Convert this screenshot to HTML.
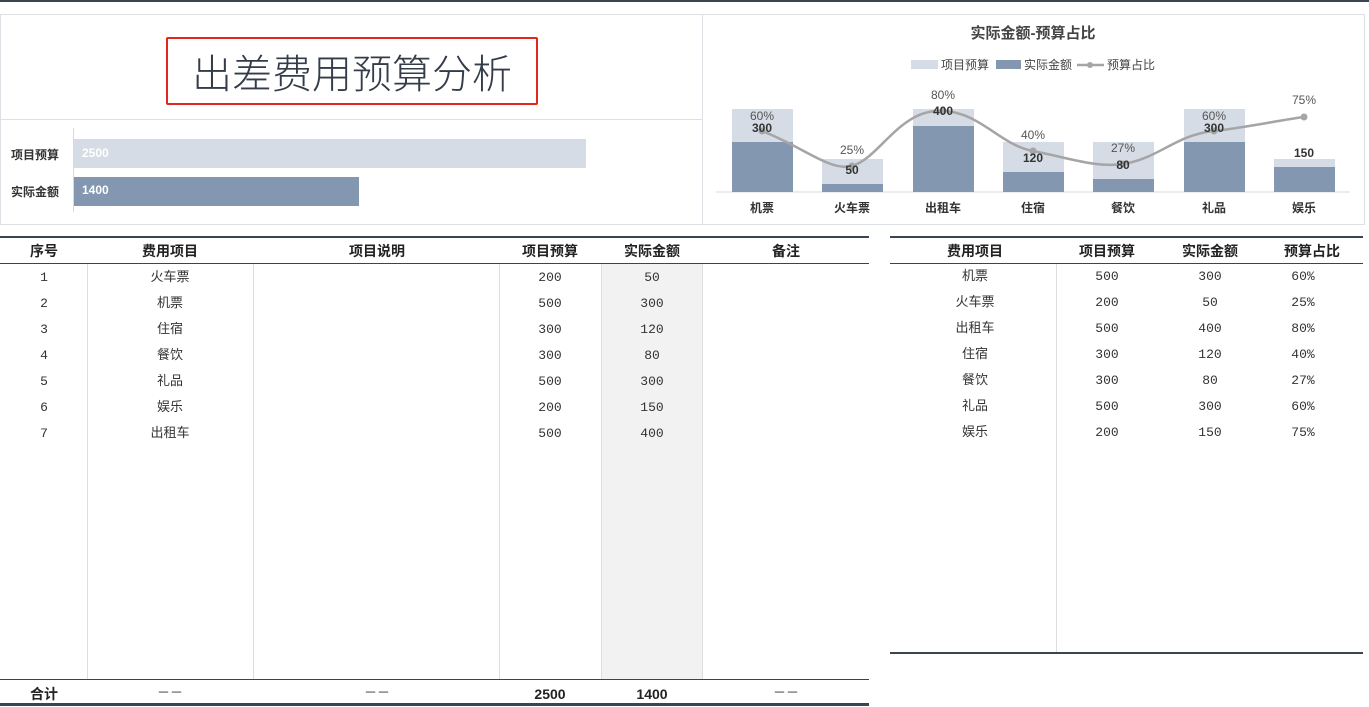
<!DOCTYPE html>
<html><head><meta charset="utf-8"><style>
*{margin:0;padding:0;box-sizing:border-box}
body{width:1369px;height:707px;background:#fff;position:relative;overflow:hidden;font-family:"Liberation Sans","Noto Sans CJK SC",sans-serif;color:#222}
.a{position:absolute}
.c{position:absolute;text-align:center;font-size:14px;line-height:16px;transform:translateX(-50%);white-space:nowrap;font-family:"Liberation Mono","Noto Sans CJK SC",monospace;font-size:13px;color:#333}
.b{font-weight:bold;font-family:"Liberation Sans","Noto Sans CJK SC",sans-serif;font-size:14px;color:#222}
</style></head><body>
<div class="a" style="left:0;top:0;width:1369px;height:2px;background:#3a4550"></div>
<div class="a" style="left:0;top:14px;width:1365px;height:211px;border:1px solid #dde1e5"></div>
<div class="a" style="left:702px;top:14px;width:1px;height:211px;background:#dde1e5"></div>
<div class="a" style="left:0;top:119px;width:702px;height:1px;background:#dde1e5"></div>
<div class="a" style="left:166px;top:37px;width:372px;height:68px;border:2px solid #e3261f;border-radius:2px"></div>
<div class="c" style="left:352px;top:45px;font-size:40px;line-height:52px;color:#333c48;font-family:'Noto Sans CJK SC',sans-serif;font-weight:300">出差费用预算分析</div>
<div class="a" style="left:73px;top:128px;width:1px;height:84px;background:#d9d9d9"></div>
<div class="a" style="left:74px;top:139px;width:512px;height:29px;background:#d5dce5"></div>
<div class="a" style="left:74px;top:177px;width:285px;height:29px;background:#8497b0"></div>
<div class="a" style="left:11px;top:146px;font-size:12px;color:#333;font-weight:bold">项目预算</div>
<div class="a" style="left:11px;top:183px;font-size:12px;color:#333;font-weight:bold">实际金额</div>
<div class="a" style="left:82px;top:146px;font-size:12px;color:#fff;font-weight:bold">2500</div>
<div class="a" style="left:82px;top:183px;font-size:12px;color:#fff;font-weight:bold">1400</div>

<svg class="a" style="left:703px;top:15px" width="662" height="209" viewBox="703 15 662 209">
<text x="1033" y="38" font-size="15" font-weight="bold" fill="#444" text-anchor="middle" font-family="Liberation Sans,Noto Sans CJK SC,sans-serif">实际金额-预算占比</text>
<rect x="911" y="60" width="27" height="9" fill="#d5dce5"/><text x="941" y="69" font-size="12" fill="#444" font-family="Noto Sans CJK SC,sans-serif">项目预算</text>
<rect x="996" y="60" width="25" height="9" fill="#8497b0"/><text x="1024" y="69" font-size="12" fill="#444" font-family="Noto Sans CJK SC,sans-serif">实际金额</text>
<line x1="1077" y1="65" x2="1104" y2="65" stroke="#a5a5a5" stroke-width="2.5"/><circle cx="1090" cy="65" r="3" fill="#a5a5a5"/><text x="1107" y="69" font-size="12" fill="#444" font-family="Noto Sans CJK SC,sans-serif">预算占比</text>
<line x1="716" y1="192" x2="1350" y2="192" stroke="#d9d9d9"/>
<g fill="#d5dce5">
<rect x="732" y="109" width="61" height="83"/><rect x="822" y="159" width="61" height="33"/><rect x="913" y="109" width="61" height="83"/><rect x="1003" y="142" width="61" height="50"/><rect x="1093" y="142" width="61" height="50"/><rect x="1184" y="109" width="61" height="83"/><rect x="1274" y="159" width="61" height="33"/></g>
<g fill="#8497b0">
<rect x="732" y="142" width="61" height="50"/><rect x="822" y="184" width="61" height="8"/><rect x="913" y="126" width="61" height="66"/><rect x="1003" y="172" width="61" height="20"/><rect x="1093" y="179" width="61" height="13"/><rect x="1184" y="142" width="61" height="50"/><rect x="1274" y="167" width="61" height="25"/></g>
<path d="M762,131 C800,145 830,172 852,166 C880,158 900,108 943,111 C980,112 1000,145 1033,151 C1065,157 1095,168 1123,164 C1160,158 1175,135 1214,131 C1250,127 1280,120 1304,117" fill="none" stroke="#a5a5a5" stroke-width="2.5"/>
<g fill="#a5a5a5"><circle cx="762" cy="131" r="3.5"/><circle cx="852" cy="166" r="3.5"/><circle cx="943" cy="111" r="3.5"/><circle cx="1033" cy="151" r="3.5"/><circle cx="1123" cy="164" r="3.5"/><circle cx="1214" cy="131" r="3.5"/><circle cx="1304" cy="117" r="3.5"/></g>
<g font-size="12" fill="#555" text-anchor="middle" font-family="Liberation Sans,sans-serif">
<text x="762" y="120">60%</text><text x="852" y="154">25%</text><text x="943" y="99">80%</text><text x="1033" y="139">40%</text><text x="1123" y="152">27%</text><text x="1214" y="120">60%</text><text x="1304" y="104">75%</text></g>
<g font-size="12" fill="#333" font-weight="bold" text-anchor="middle" font-family="Liberation Sans,sans-serif">
<text x="762" y="132">300</text><text x="852" y="174">50</text><text x="943" y="115">400</text><text x="1033" y="162">120</text><text x="1123" y="169">80</text><text x="1214" y="132">300</text><text x="1304" y="157">150</text></g>
<g font-size="12" fill="#333" font-weight="bold" text-anchor="middle" font-family="Noto Sans CJK SC,sans-serif">
<text x="762" y="212">机票</text><text x="852" y="212">火车票</text><text x="943" y="212">出租车</text><text x="1033" y="212">住宿</text><text x="1123" y="212">餐饮</text><text x="1214" y="212">礼品</text><text x="1304" y="212">娱乐</text></g>
</svg>

<div class="a" style="left:601px;top:264px;width:101px;height:416px;background:#f2f2f2"></div>
<div class="a" style="left:0;top:236px;width:869px;height:2px;background:#3a4550"></div>
<div class="a" style="left:0;top:263px;width:869px;height:1px;background:#3a4550"></div>
<div class="a" style="left:0;top:679px;width:869px;height:1px;background:#3a4550"></div>
<div class="a" style="left:0;top:703px;width:869px;height:3px;background:#3a4550"></div>
<div class="a" style="left:87px;top:264px;width:1px;height:415px;background:#ddd"></div>
<div class="a" style="left:253px;top:264px;width:1px;height:415px;background:#ddd"></div>
<div class="a" style="left:499px;top:264px;width:1px;height:415px;background:#ddd"></div>
<div class="a" style="left:601px;top:264px;width:1px;height:415px;background:#ddd"></div>
<div class="a" style="left:702px;top:264px;width:1px;height:415px;background:#ddd"></div>
<div class="c b" style="left:44px;top:243px">序号</div><div class="c b" style="left:170px;top:243px">费用项目</div><div class="c b" style="left:377px;top:243px">项目说明</div><div class="c b" style="left:550px;top:243px">项目预算</div><div class="c b" style="left:652px;top:243px">实际金额</div><div class="c b" style="left:786px;top:243px">备注</div>

<div class="c" style="left:44px;top:270px">1</div><div class="c" style="left:170px;top:270px">火车票</div><div class="c" style="left:550px;top:270px">200</div><div class="c" style="left:652px;top:270px">50</div>
<div class="c" style="left:44px;top:296px">2</div><div class="c" style="left:170px;top:296px">机票</div><div class="c" style="left:550px;top:296px">500</div><div class="c" style="left:652px;top:296px">300</div>
<div class="c" style="left:44px;top:322px">3</div><div class="c" style="left:170px;top:322px">住宿</div><div class="c" style="left:550px;top:322px">300</div><div class="c" style="left:652px;top:322px">120</div>
<div class="c" style="left:44px;top:348px">4</div><div class="c" style="left:170px;top:348px">餐饮</div><div class="c" style="left:550px;top:348px">300</div><div class="c" style="left:652px;top:348px">80</div>
<div class="c" style="left:44px;top:374px">5</div><div class="c" style="left:170px;top:374px">礼品</div><div class="c" style="left:550px;top:374px">500</div><div class="c" style="left:652px;top:374px">300</div>
<div class="c" style="left:44px;top:400px">6</div><div class="c" style="left:170px;top:400px">娱乐</div><div class="c" style="left:550px;top:400px">200</div><div class="c" style="left:652px;top:400px">150</div>
<div class="c" style="left:44px;top:426px">7</div><div class="c" style="left:170px;top:426px">出租车</div><div class="c" style="left:550px;top:426px">500</div><div class="c" style="left:652px;top:426px">400</div>

<div class="c b" style="left:44px;top:686px">合计</div><div class="c" style="left:170px;top:686px">－－</div><div class="c" style="left:377px;top:686px">－－</div><div class="c b" style="left:550px;top:686px">2500</div><div class="c b" style="left:652px;top:686px">1400</div><div class="c" style="left:786px;top:686px">－－</div>

<div class="a" style="left:890px;top:236px;width:473px;height:2px;background:#3a4550"></div>
<div class="a" style="left:890px;top:263px;width:473px;height:1px;background:#3a4550"></div>
<div class="a" style="left:890px;top:652px;width:473px;height:2px;background:#3a4550"></div>
<div class="a" style="left:1056px;top:264px;width:1px;height:388px;background:#ddd"></div>
<div class="c b" style="left:975px;top:243px">费用项目</div><div class="c b" style="left:1107px;top:243px">项目预算</div><div class="c b" style="left:1210px;top:243px">实际金额</div><div class="c b" style="left:1312px;top:243px">预算占比</div>
<div class="c" style="left:975px;top:269px">机票</div><div class="c" style="left:1107px;top:269px">500</div><div class="c" style="left:1210px;top:269px">300</div><div class="c" style="left:1303px;top:269px">60%</div>
<div class="c" style="left:975px;top:295px">火车票</div><div class="c" style="left:1107px;top:295px">200</div><div class="c" style="left:1210px;top:295px">50</div><div class="c" style="left:1303px;top:295px">25%</div>
<div class="c" style="left:975px;top:321px">出租车</div><div class="c" style="left:1107px;top:321px">500</div><div class="c" style="left:1210px;top:321px">400</div><div class="c" style="left:1303px;top:321px">80%</div>
<div class="c" style="left:975px;top:347px">住宿</div><div class="c" style="left:1107px;top:347px">300</div><div class="c" style="left:1210px;top:347px">120</div><div class="c" style="left:1303px;top:347px">40%</div>
<div class="c" style="left:975px;top:373px">餐饮</div><div class="c" style="left:1107px;top:373px">300</div><div class="c" style="left:1210px;top:373px">80</div><div class="c" style="left:1303px;top:373px">27%</div>
<div class="c" style="left:975px;top:399px">礼品</div><div class="c" style="left:1107px;top:399px">500</div><div class="c" style="left:1210px;top:399px">300</div><div class="c" style="left:1303px;top:399px">60%</div>
<div class="c" style="left:975px;top:425px">娱乐</div><div class="c" style="left:1107px;top:425px">200</div><div class="c" style="left:1210px;top:425px">150</div><div class="c" style="left:1303px;top:425px">75%</div>
</body></html>
